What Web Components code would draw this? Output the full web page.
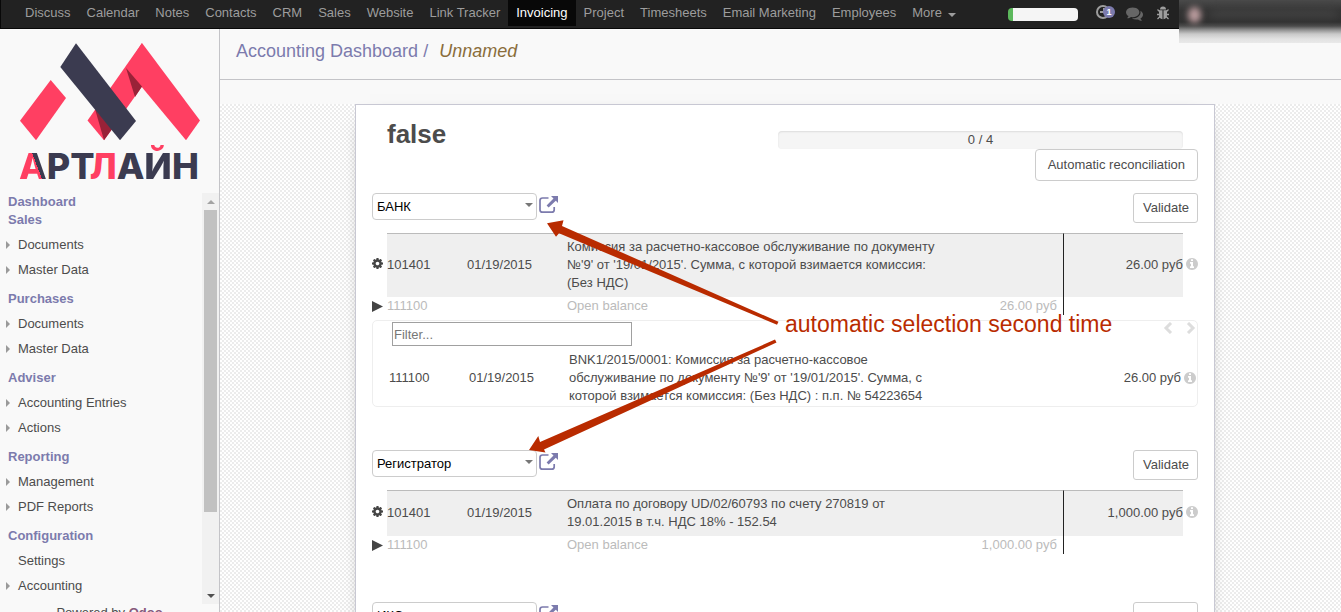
<!DOCTYPE html>
<html lang="en">
<head>
<meta charset="utf-8">
<title>Accounting Dashboard</title>
<style>
html, body { margin: 0; height: 100%; }
body { font: 13px/18px "Liberation Sans", Arial, sans-serif; color: #4c4c4c; background: #f9f9f9; overflow: hidden; }
</style>
</head>
<body>
<app-shell>
  <app-navbar slot="top">
    <nav-item>Discuss</nav-item><nav-item>Calendar</nav-item><nav-item>Notes</nav-item><nav-item>Contacts</nav-item><nav-item>CRM</nav-item><nav-item>Sales</nav-item><nav-item>Website</nav-item><nav-item>Link Tracker</nav-item><nav-item active>Invoicing</nav-item><nav-item>Project</nav-item><nav-item>Timesheets</nav-item><nav-item>Email Marketing</nav-item><nav-item>Employees</nav-item><nav-item caret>More</nav-item>
  </app-navbar>
  <app-sidebar slot="side">
    <menu-group heading="Dashboard" tight></menu-group>
    <menu-group heading="Sales"><menu-entry>Documents</menu-entry><menu-entry>Master Data</menu-entry></menu-group>
    <menu-group heading="Purchases"><menu-entry>Documents</menu-entry><menu-entry>Master Data</menu-entry></menu-group>
    <menu-group heading="Adviser"><menu-entry>Accounting Entries</menu-entry><menu-entry>Actions</menu-entry></menu-group>
    <menu-group heading="Reporting"><menu-entry>Management</menu-entry><menu-entry>PDF Reports</menu-entry></menu-group>
    <menu-group heading="Configuration"><menu-entry leaf>Settings</menu-entry><menu-entry>Accounting</menu-entry></menu-group>
  </app-sidebar>
  <control-panel slot="main"></control-panel>
  <reconcile-sheet slot="main" heading="false" progress="0 / 4">
    <reconcile-line partner="БАНК" account="101401" date="01/19/2015" amount="26.00 руб" open="111100">
      Комиссия за расчетно-кассовое обслуживание по документу №'9' от '19/01/2015'. Сумма, с которой взимается комиссия: (Без НДС)
      <match-panel slot="match" account="111100" date="01/19/2015" amount="26.00 руб">BNK1/2015/0001: Комиссия за расчетно-кассовое обслуживание по документу №'9' от '19/01/2015'. Сумма, с которой взимается комиссия: (Без НДС) : п.п. № 54223654</match-panel>
    </reconcile-line>
    <reconcile-line partner="Регистратор" account="101401" date="01/19/2015" amount="1,000.00 руб" open="111100">Оплата по договору UD/02/60793 по счету 270819 от 19.01.2015 в т.ч. НДС 18% - 152.54</reconcile-line>
    <reconcile-line partner="ИКС" account="101401" date="01/19/2015" amount="500.00 руб" open="111100">Оплата по счету</reconcile-line>
    <callout-note slot="note">automatic selection second time</callout-note>
  </reconcile-sheet>
</app-shell>

<script>
const define = (name, render, after) => customElements.define(name, class extends HTMLElement {
  constructor() { super(); this.attachShadow({ mode: "open" }); }
  connectedCallback() {
    const t = document.createElement("template");
    t.innerHTML = render(n => this.getAttribute(n) || "", n => this.hasAttribute(n));
    this.shadowRoot.replaceChildren(t.content.cloneNode(true));
  }
});

const PATHS = {
  cog: "M1152 896q0-106-75-181t-181-75-181 75-75 181 75 181 181 75 181-75 75-181zm512-109v222q0 12-8 23t-20 13l-185 28q-19 54-39 91 35 50 107 138 10 12 10 25t-9 23q-27 37-99 108t-94 71q-12 0-26-9l-138-108q-44 23-91 38-16 136-29 186-7 28-36 28h-222q-14 0-24.5-8.5t-11.5-21.5l-28-184q-49-16-90-37l-141 107q-10 9-25 9-14 0-25-11-126-114-165-168-7-10-7-23 0-12 8-23 15-21 51-66.5t54-70.5q-27-50-41-99l-183-27q-13-2-21-12.5t-8-23.5v-222q0-12 8-23t19-13l186-28q14-46 39-92-40-57-107-138-10-12-10-24 0-10 9-23 26-36 98.5-107.5t94.5-71.5q13 0 26 10l138 107q44-23 91-38 16-136 29-186 7-28 36-28h222q14 0 24.5 8.5t11.5 21.5l28 184q49 16 90 37l142-107q9-9 24-9 13 0 25 10 129 119 165 170 7 8 7 22 0 12-8 23-15 21-51 66.5t-54 70.5q26 50 41 98l183 28q13 2 21 12.5t8 23.5z",
  info: "M1152 1376v-160q0-14-9-23t-23-9h-96v-512q0-14-9-23t-23-9h-320q-14 0-23 9t-9 23v160q0 14 9 23t23 9h96v320h-96q-14 0-23 9t-9 23v160q0 14 9 23t23 9h448q14 0 23-9t9-23zm-128-896v-160q0-14-9-23t-23-9h-192q-14 0-23 9t-9 23v160q0 14 9 23t23 9h192q14 0 23-9t9-23zm640 416q0 209-103 385.5t-279.5 279.5-385.5 103-385.5-103-279.5-279.5-103-385.5 103-385.5 279.5-279.5 385.5-103 385.5 103 279.5 279.5 103 385.5z",
  comments: "M1408 768q0 139-94 257t-256.5 186.5-353.5 68.5q-86 0-176-16-124 88-278 128-36 9-86 16h-3q-11 0-20.5-8t-11.5-21q-1-3-1-6.5t.5-6.5 2-6l2.5-5 3.5-5.5 4-5 4.500-5 4-4.500q5-6 23-25t26-29.500 22.500-29 25-38.500 20.500-44q-124-72-195-177t-71-224q0-139 94-257t256.500-186.500 353.500-68.500 353.500 68.500 256.500 186.500 94 257zm384 256q0 120-71 224.500t-195 176.500q10 24 20.500 44t25 38.500 22.500 29 26 29.500 23 25q1 1 4 4.500t4.500 5 4 5 3.500 5.500l2.500 5 2 6 .5 6.500-1 6.500q-3 14-13 22t-22 7q-50-7-86-16-154-40-278-128-90 16-176 16-271 0-472-132 58 4 88 4 161 0 309-45t264-129q125-92 192-212t67-254q0-77-23-152 129 71 204 178t75 230z"
};
const icon = (name, size, box = "0 0 1792 1792") => `<svg width="${size}" height="${size}" viewBox="${box}" fill="currentColor" aria-hidden="true"><path d="${PATHS[name]}"/></svg>`;
const TRIM = "128 128 1536 1536";

define("app-shell", () => `
<style>
:host { display: grid; grid-template: auto minmax(0, 1fr) / 219px minmax(0, 1fr); height: 100vh; overflow: hidden; }
.top { grid-column: 1 / -1; }
main { display: flex; flex-direction: column; border-left: 1px solid #c4c4c8; min-height: 0; overflow: hidden; }
.side { min-height: 0; overflow: hidden; display: grid; }
</style>
<header class="top"><slot name="top"></slot></header>
<div class="side"><slot name="side"></slot></div>
<main><slot name="main"></slot></main>`);

define("nav-item", (a, h) => `
<style>
:host { display: block; flex: none; }
a { display: flex; align-items: center; gap: 6px; height: 26px; line-height: 26px; padding: 0 8px; color: #9d9d9d; text-decoration: none; white-space: nowrap; }
a.active { background: #080808; color: #fff; }
i { border: 4px solid transparent; border-top-color: #9d9d9d; border-bottom: 0; margin-top: 3px; }
</style>
<a href="#" class="${h("active") ? "active" : ""}"><slot></slot>${h("caret") ? "<i></i>" : ""}</a>`);

define("app-navbar", () => `
<style>
:host { display: flex; position: relative; height: 28px; background: #222; border-bottom: 1px solid #080808; box-shadow: inset 1px 0 #080808; padding-left: 17px; }
nav { display: flex; flex: 1; }
.tools { display: flex; align-items: center; height: 26px; }
.plan { width: 70px; height: 13px; border-radius: 4px; background: linear-gradient(90deg, #5cb85c 5px, #f5f5f5 5px); margin: 3px 18px 0 0; }
button { border: 0; padding: 0; background: none; color: #9d9d9d; display: block; position: relative; height: 20px; }
.clock { width: 20px; margin-right: 10px; }
.talk { width: 17px; margin-right: 13px; color: #666; }
.bug { width: 14px; margin-right: 9px; }
button svg { display: block; }
.badge { position: absolute; left: 7px; top: 3px; width: 12px; height: 12px; border-radius: 6px; background: #7c7bad; color: #fff; font: bold 9px/12px "Liberation Sans", Arial, sans-serif; text-align: center; }
.user { width: 162px; }
.veil { position: absolute; right: 0; top: 0; width: 162px; height: 43px; overflow: hidden; z-index: 2; background: linear-gradient(#4a4a4a, #353535 10px, #303030 22px, #4c4c4c 26px, #929292 30px, #c9c9c9 34px, #e2e2e2 39px, #e9e9e9); }
.veil i { position: absolute; left: 9px; top: 7px; width: 13px; height: 16px; border-radius: 7px; background: #b89a9c; filter: blur(3px); }
.veil b { position: absolute; left: 32px; right: 4px; top: 10px; height: 8px; background: #505050; opacity: .5; filter: blur(4px); }
</style>
<nav aria-label="Applications"><slot></slot></nav>
<div class="tools">
  <div class="plan" role="progressbar" aria-label="Setup progress" aria-valuenow="7"></div>
  <button class="clock" aria-label="Activities"><svg width="20" height="20" fill="none" stroke="#9d9d9d" stroke-width="2"><circle cx="7" cy="9" r="6"/><path d="M8 5v4H4"/></svg><span class="badge">1</span></button>
  <button class="talk" aria-label="Messages">${icon("comments", 17)}</button>
  <button class="bug" aria-label="Debug"><svg width="14" height="18" viewBox="0 0 14 18" fill="#9d9d9d" stroke="#9d9d9d"><path stroke="none" d="M4 5.500a3 3 0 0 1 6 0zM3 6.200h3.500v9C4.300 15 3 13.500 3 11zM7.500 6.200H11V11c0 2.500-1.300 4-3.500 4.200z"/><path fill="none" stroke-width="1.300" d="M4 8 1.500 5.500M10 8l2.500-2.500M4 10.500H1M10 10.500h3M4 12.500 1.500 15M10 12.500l2.500 2.500"/></svg></button>
</div>
<div class="user"></div>
<div class="veil"><i></i><b></b></div>`);

define("menu-entry", (a, h) => `
<style>
:host { display: block; }
a { display: flex; align-items: center; height: 25px; color: #4c4c4c; text-decoration: none; padding-left: 6px; }
i { width: 12px; box-sizing: border-box; flex: none; height: 8px; }
i::before { content: ""; display: block; width: 0; border: 4px solid transparent; border-left-color: #9a9a9a; border-right: 0; }
i.leaf::before { display: none; }
</style>
<a href="#"><i class="${h("leaf") ? "leaf" : ""}"></i><slot></slot></a>`);

define("menu-group", (a, h) => `
<style>
:host { display: block; margin-bottom: 8px; }
:host([tight]) { margin-bottom: 0; }
a { display: block; padding-left: 8px; color: #7c7bad; font-weight: bold; text-decoration: none; line-height: 18px; }
div { padding-top: 3px; }
</style>
<a href="#">${a("heading")}</a>${h("tight") ? "" : "<div><slot></slot></div>"}`);

define("brand-logo", () => `
<style>
:host { display: block; padding: 14px 0 0 19px; }
svg { display: block; }
.word { font: 800 36px/36px Inter, "Open Sans", sans-serif; color: #3b3b50; margin-top: 7px; white-space: nowrap; height: 45px; }
.word span { color: #ff3f62; }
.word .split, .word .accent { color: transparent; background-clip: text; -webkit-background-clip: text; }
.word .split { background-image: linear-gradient(69deg, #ff3f62 59%, #3b3b50 59%); }
.word .accent { background-image: linear-gradient(#ff3f62 9px, #3b3b50 9px); }
</style>
<svg width="182" height="98" viewBox="19 43 182 98" role="img" aria-label="Logo">
  <g fill="#ff3f62"><path d="M50.700 80 66 98 36 140.300 20 120.700z"/><path d="M142 43 87.500 120.500 104 140.300 142 86.500z"/><path d="M142 43 200 120.500 186 140.300 126 68z"/></g>
  <g fill="#992238"><path d="M126 68l16 18.500-7 10.500z"/><path d="M95 109l9 31.300 8-11z"/></g>
  <path fill="#3b3b50" d="M76 43.300 136 121 120 140.300 60.300 67z"/>
</svg>
<div class="word"><span class="split">А</span>РТ<span>Л</span>А<span class="accent">Й</span>Н</div>`);

define("app-sidebar", () => `
<style>
:host { display: flex; flex-direction: column; min-height: 0; }
.scroll { flex: 1; display: flex; min-height: 0; }
nav { flex: 1; min-height: 0; overflow: hidden; }
.bar { width: 17px; background: #f1f1f1; display: flex; flex-direction: column; align-items: center; }
.btn { height: 17px; display: flex; align-items: center; }
.up::before, .down::before { content: ""; border: 4px solid transparent; }
.up::before { border-bottom-color: #a3a3a3; border-top: 0; }
.down::before { border-top-color: #505050; border-bottom: 0; }
.thumb { width: 13px; flex: 0 0 80%; background: #c1c1c1; }
.track { flex: 1; min-height: 0; display: flex; flex-direction: column; }
footer { height: 8px; text-align: center; font-size: 13px; overflow: hidden; }
footer a { color: #875a7b; font-weight: bold; text-decoration: none; }
</style>
<brand-logo></brand-logo>
<div class="scroll">
  <nav aria-label="Menu"><slot></slot></nav>
  <div class="bar"><div class="btn up"></div><div class="track"><div class="thumb"></div></div><div class="btn down"></div></div>
</div>
<footer>Powered by <a href="#">Odoo</a></footer>`);

define("control-panel", () => `
<style>
:host { display: block; border-bottom: 1px solid #c4c4c8; padding: 12px 16px 18px; flex: none; }
ol { display: flex; list-style: none; margin: 0; padding: 0; font-size: 18px; line-height: 20px; }
a { color: #7c7bad; text-decoration: none; }
li + li { color: #8a6d3b; font-style: italic; }
li + li::before { content: "/"; font-style: normal; color: #7c7bad; padding: 0 11px 0 5px; }
</style>
<ol><li><a href="#">Accounting Dashboard</a></li><li>Unnamed</li></ol>`);

define("reconcile-sheet", a => `
<style>
:host { display: block; flex: 1; min-height: 0; padding: 0 0 0 9px; background: repeating-conic-gradient(#ececec 0 25%, #fff 0 50%) 0 24px / 4px 4px; position: relative; }
:host::before { content: ""; position: absolute; inset: 0 0 auto; height: 24px; background: #f9f9f9; }
.sheet { position: relative; box-sizing: border-box; max-width: 860px; margin: 24px auto 0; padding: 15px 16px; background: #fff; border: 1px solid #c8c8d3; box-shadow: 0 5px 20px -15px #000; }
header { display: flex; justify-content: space-between; align-items: flex-start; padding: 0 15px; }
h1 { margin: 0; font-size: 26px; line-height: 29px; }
.progress { flex: 0 1 405px; height: 18px; margin-top: 11px; background: #f5f5f5; border-radius: 4px; box-shadow: inset 0 1px 2px rgba(0,0,0,.1); text-align: center; line-height: 17px; }
.auto { display: flex; justify-content: flex-end; margin-bottom: 12px; }
button { font: inherit; color: #4c4c4c; background: #fff; border: 1px solid #ccc; border-radius: 4px; padding: 6px 12px; height: 32px; }
</style>
<div class="sheet">
  <header><h1>${a("heading")}</h1><div class="progress" role="progressbar" aria-label="Reconciled">${a("progress")}</div></header>
  <div class="auto"><button>Automatic reconciliation</button></div>
  <slot></slot><slot name="note"></slot>
</div>`);

const TABLE = `
table { width: 100%; border-collapse: separate; border-spacing: 0; table-layout: fixed; }
td { padding: 0; text-align: left; vertical-align: middle; }
.label { padding-right: 4px; }
.num { text-align: right; white-space: nowrap; }
.mark { width: 15px; line-height: 0; }
td svg { display: block; }
.info { color: #ccc; }
.info svg { margin: 0 0 0 auto; }
`;
const COLS = `<colgroup><col style="width:15px"><col style="width:80px"><col style="width:100px"><col><col style="width:116px"><col style="width:120px"><col style="width:15px"></colgroup>`;

define("reconcile-line", a => `
<style>
:host { display: block; padding-bottom: 43px; }
.bar { display: flex; align-items: flex-start; height: 40px; }
select { appearance: none; box-sizing: border-box; width: 165px; height: 27px; margin: 0; padding: 0 20px 0 4px; border: 1px solid #ccc; border-radius: 4px; font: inherit; color: #000; background: #fff; display: block; }
.pick { position: relative; }
.pick::after { content: ""; position: absolute; right: 4px; top: 10px; border: 4px solid transparent; border-top-color: #777; border-bottom: 0; pointer-events: none; }
.open { margin: 3px 0 0 2px; color: #7c7bad; }
.open svg { display: block; }
.bar button { margin-left: auto; font: inherit; color: #4c4c4c; background: #fff; border: 1px solid #ccc; border-radius: 3px; padding: 5px 9px; height: 30px; width: 65px; }
${TABLE}
.stmt .cell { background: #efefef; border-top: 1px solid #bbb; padding-top: 4px; padding-bottom: 5px; }
.stmt .mark { padding-bottom: 3px; }
.right { border-left: 1px solid #222; }
.bal td { color: #bbb; line-height: 18px; }
.bal .left { padding-right: 6px; }
.gear { color: #444; }
table { margin-bottom: 5px; }
</style>
<div class="bar">
  <div class="pick"><select aria-label="Partner"><option>${a("partner")}</option></select></div>
  <a class="open" href="#" aria-label="Open partner"><svg width="20" height="18" viewBox="0 0 20 18"><path d="M9.500 2H3.500Q1 2 1 4.500v9.200Q1 16.200 3.500 16.200h9.200q2.500 0 2.500-2.500V11" fill="none" stroke="currentColor" stroke-width="1.700"/><path d="M12 0h7v7l-2.200-2.200-7.200 6.700-2-2 6.900-7z" fill="currentColor"/></svg></a>
  <button>Validate</button>
</div>
<table>${COLS}
<tr class="stmt"><td class="mark gear">${icon("cog", 11, TRIM)}</td><td class="cell">${a("account")}</td><td class="cell">${a("date")}</td><td class="cell label"><slot></slot></td><td class="cell"></td><td class="cell num right">${a("amount")}</td><td class="mark info">${icon("info", 12, TRIM)}</td></tr>
<tr class="bal"><td class="mark"><svg width="11" height="11"><path d="M0 0 11 5.500 0 11z" fill="#444"/></svg></td><td>${a("open")}</td><td></td><td class="label">Open balance</td><td class="num left">${a("amount")}</td><td class="right"></td><td></td></tr>
</table>
<slot name="match"></slot>`);

define("match-panel", a => `
<style>
:host { display: block; border: 1px solid #eee; border-radius: 5px; padding: 1px; }
.head { display: flex; justify-content: space-between; padding-left: 18px; margin-bottom: 5px; }
input { box-sizing: border-box; width: 240px; height: 24px; border: 1px solid #a0a0a0; border-radius: 0; padding: 1px; font: inherit; color: #4c4c4c; background: #fff; }
input::placeholder { color: #777; opacity: 1; }
.pager { display: flex; gap: 13px; height: 12px; }
.pager button { border: 0; background: none; padding: 0; width: 10px; height: 12px; }
.pager svg { display: block; }
${TABLE}
</style>
<div class="head"><input type="text" placeholder="Filter..." aria-label="Filter">
<div class="pager"><button aria-label="Previous"><svg width="10" height="12" fill="none" stroke="#ddd" stroke-width="3"><path d="M8 1 3 6l5 5"/></svg></button><button aria-label="Next"><svg width="10" height="12" fill="none" stroke="#ddd" stroke-width="3"><path d="M2 1l5 5-5 5"/></svg></button></div></div>
<table>${COLS}
<tr><td></td><td>${a("account")}</td><td>${a("date")}</td><td class="label"><slot></slot></td><td></td><td class="num">${a("amount")}</td><td class="mark info">${icon("info", 12, TRIM)}</td></tr></table>`);

define("callout-note", () => `
<style>
:host { position: absolute; left: 170px; top: 110px; width: 610px; height: 250px; color: #b92b00; pointer-events: none; }
svg { position: absolute; left: 0; top: 0; }
span { position: absolute; left: 259px; top: 96px; font-size: 23px; line-height: 26px; white-space: nowrap; }
</style>
<svg width="260" height="250" viewBox="526 215 260 250" fill="currentColor" aria-hidden="true">
  <path d="M547 223.300 563.500 220.300 562 226 778.500 321.800 777 324.800 559 233.300 556 236.700z"/>
  <path d="M529 450 538.300 436 540 442 775 339.600 776.500 342.500 544 449.600 545.500 452.600z"/>
</svg>
<span><slot></slot></span>`);
</script>
</body>
</html>
